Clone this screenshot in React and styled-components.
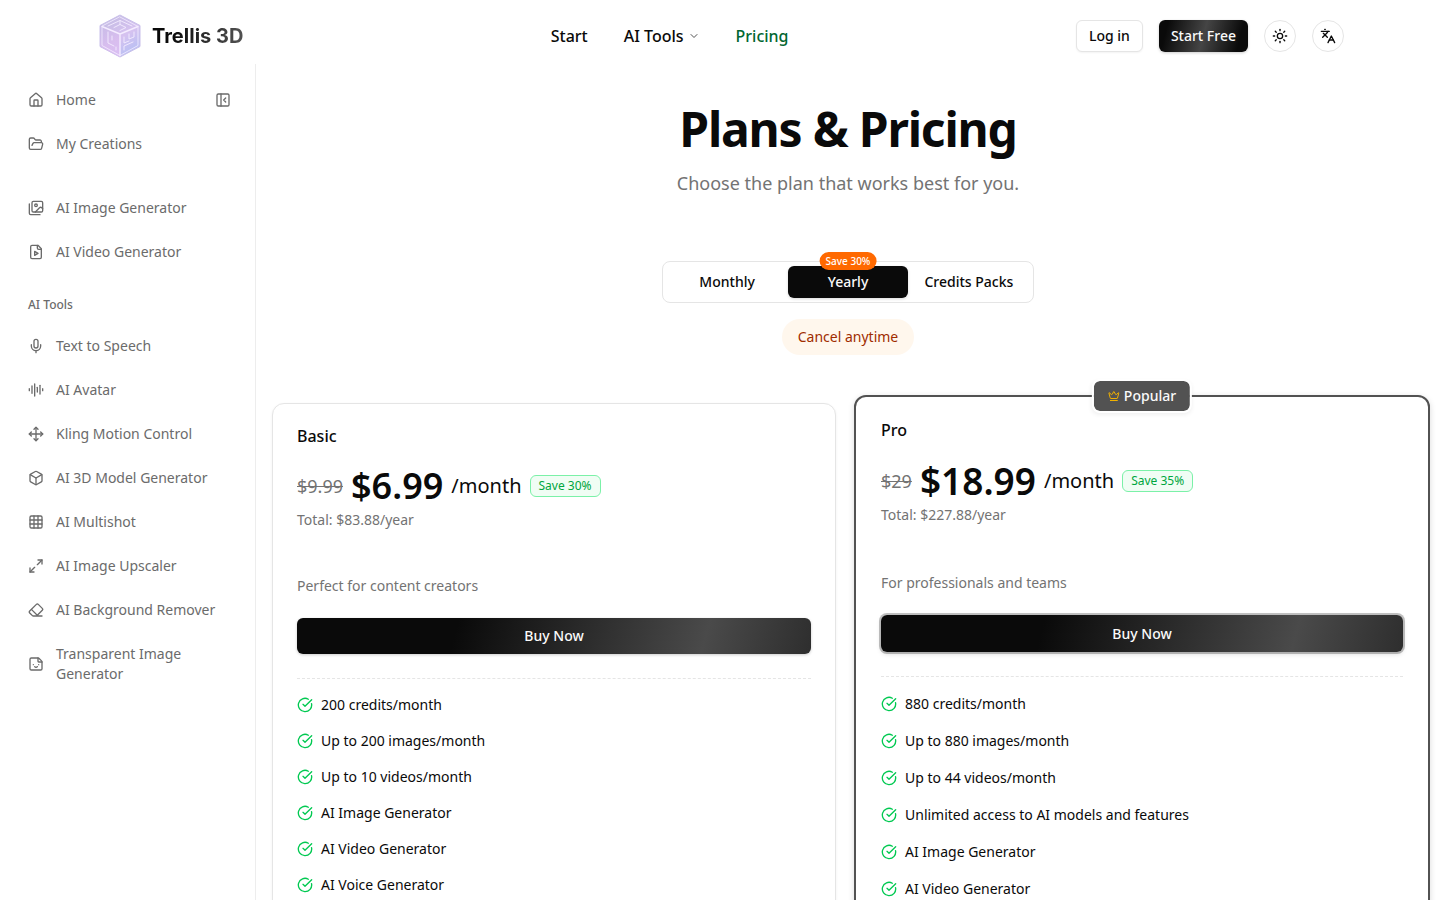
/*
 *
 * Pricing page
 *
 */
import React, { useState } from 'react';
import styled, { createGlobalStyle, css } from 'styled-components';
import {
  AudioLines,
  Box,
  ChevronDown,
  CircleCheckBig,
  Crown,
  Eraser,
  FolderOpen,
  Grid3x3,
  House,
  Languages,
  Maximize2,
  Mic,
  Move,
  PanelLeftClose,
  Sticker,
  Sun,
} from 'lucide-react';

const GlobalStyle = createGlobalStyle`
  *, *::before, *::after {
    box-sizing: border-box;
  }

  body {
    margin: 0;
    background: #fff;
    color: #0a0a0a;
    font-family: "Noto Sans", sans-serif;
    font-size: 14px;
    line-height: 20px;
  }

  h1, h2, p, ul {
    margin: 0;
    padding: 0;
  }

  button {
    font-family: inherit;
    color: inherit;
    cursor: pointer;
  }

  a {
    color: inherit;
    text-decoration: none;
  }
`;

/* Header */

const Header = styled.header`
  display: flex;
  align-items: center;
  justify-content: space-between;
  height: 64px;
  padding: 8px 96px 0;
`;

const Brand = styled.a`
  display: flex;
  align-items: center;
  gap: 8px;
  padding-right: 20px;
`;

const BrandName = styled.span`
  font-family: Inter, sans-serif;
  font-size: 20px;
  font-weight: 700;
  line-height: 28px;
  color: transparent;
  background: linear-gradient(90deg, #0a0a0a 20%, #525252);
  background-clip: text;
`;

const Nav = styled.nav`
  display: flex;
  align-items: center;
  gap: 36px;
  font-size: 16px;
  font-weight: 500;
  line-height: 24px;
`;

const NavLink = styled.a`
  display: flex;
  align-items: center;
  gap: 4px;
  color: ${({ $active }) => ($active ? '#016630' : '#0a0a0a')};

  svg {
    color: #525252;
  }
`;

const Actions = styled.div`
  display: flex;
  align-items: center;
  gap: 16px;
`;

const SmallButton = styled.button`
  height: 32px;
  padding: 0 12px;
  border: 1px solid #e5e5e5;
  border-radius: 6px;
  background: #fff;
  font-size: 14px;
  font-weight: 500;
  line-height: 20px;
  box-shadow: 0 1px 2px rgba(0, 0, 0, 0.05);

  ${({ $primary }) =>
    $primary &&
    css`
      border: 0;
      color: #fafafa;
      background: linear-gradient(105deg, #0a0a0a 10%, #454545 50%, #0a0a0a 88%);
      box-shadow: 0 1px 3px rgba(0, 0, 0, 0.2);
    `}
`;

const RoundButton = styled.button`
  display: flex;
  align-items: center;
  justify-content: center;
  width: 32px;
  height: 32px;
  padding: 0;
  border: 1px solid #e5e5e5;
  border-radius: 50%;
  background: #fff;
`;

/* Sidebar */

const Body = styled.div`
  display: flex;
  min-height: calc(100vh - 64px);
`;

const Sidebar = styled.aside`
  flex: 0 0 256px;
  padding: 18px 16px;
  border-right: 1px solid #ededed;
  color: #6b6b6b;
`;

const SideGroup = styled.ul`
  display: flex;
  flex-direction: column;
  gap: 8px;
  margin-bottom: 28px;
  list-style: none;
`;

const SideRow = styled.li`
  display: flex;
  align-items: center;
`;

const SideLink = styled.a`
  flex: 1;
  display: flex;
  align-items: center;
  gap: 12px;
  padding: 8px 12px;

  svg {
    flex-shrink: 0;
  }
`;

const CollapseButton = styled.button`
  display: flex;
  padding: 8px;
  border: 0;
  background: none;
`;

const SideLabel = styled.h2`
  padding: 0 12px;
  margin: -1px 0 15px;
  font-size: 12px;
  font-weight: 500;
  line-height: 16px;
`;

/* Page heading */

const Main = styled.main`
  flex: 1;
  min-width: 0;
  display: flex;
  flex-direction: column;
  align-items: center;
  padding: 41px 16px 48px;
`;

const Title = styled.h1`
  font-size: 48px;
  font-weight: 700;
  line-height: 48px;
  letter-spacing: -0.025em;
`;

const Subtitle = styled.p`
  margin-top: 16px;
  font-size: 18px;
  line-height: 28px;
  color: #737373;
`;

const Tabs = styled.div`
  display: grid;
  grid-template-columns: repeat(3, 1fr);
  margin-top: 64px;
  padding: 4px;
  border: 1px solid #e5e5e5;
  border-radius: 8px;
`;

const Tab = styled.button`
  position: relative;
  height: 32px;
  padding: 0 16px;
  border: 0;
  border-radius: 6px;
  font-size: 14px;
  font-weight: 500;
  line-height: 20px;
  background: none;

  &[aria-selected='true'] {
    color: #fafafa;
    background: #0a0a0a;
    box-shadow: 0 1px 3px rgba(0, 0, 0, 0.15);
  }
`;

const TabBadge = styled.span`
  position: absolute;
  top: -14px;
  left: 50%;
  transform: translateX(-50%);
  padding: 0 6px;
  border-radius: 9px;
  font-size: 10px;
  font-weight: 500;
  line-height: 18px;
  white-space: nowrap;
  color: #fff;
  background: #ff6900;
`;

const Notice = styled.p`
  margin-top: 16px;
  padding: 8px 16px;
  border-radius: 18px;
  color: #9f2d00;
  background: #fff7ed;
`;

/* Plan cards */

const Plans = styled.div`
  align-self: stretch;
  display: grid;
  grid-template-columns: 1fr 1fr;
  gap: 24px;
  margin-top: 48px;
`;

const Card = styled.section`
  position: relative;
  display: flex;
  flex-direction: column;
  padding: 24px;
  border: 1px solid #e5e5e5;
  border-radius: 12px;
  background: #fff;
  box-shadow: 0 1px 3px rgba(0, 0, 0, 0.06);

  ${({ $popular }) =>
    $popular &&
    css`
      margin: -8px -6px;
      padding: 25px;
      border: 2px solid #525252;
      box-shadow: 0 2px 6px rgba(0, 0, 0, 0.15);
    `}
`;

const PopularBadge = styled.span`
  position: absolute;
  top: -18px;
  left: 50%;
  transform: translateX(-50%);
  display: flex;
  align-items: center;
  gap: 4px;
  padding: 5px 14px;
  border: 2px solid #fff;
  border-radius: 8px;
  font-weight: 500;
  color: #fafafa;
  background: #525252;
  background-clip: padding-box;
  box-shadow: 0 2px 4px rgba(0, 0, 0, 0.06);

  svg {
    color: #f0b100;
  }
`;

const PlanName = styled.h2`
  font-size: 16px;
  font-weight: 500;
  line-height: 16px;
`;

const PriceRow = styled.div`
  display: flex;
  align-items: center;
  gap: 8px;
  margin-top: ${({ $popular }) => ($popular ? 23 : 22)}px;
`;

const OldPrice = styled.s`
  font-size: 18px;
  line-height: 28px;
  color: #737373;
`;

const Price = styled.span`
  font-size: ${({ $popular }) => ($popular ? 37 : 36)}px;
  font-weight: 600;
  line-height: 40px;
`;

const Period = styled.span`
  font-size: 20px;
  line-height: 28px;
`;

const SaveBadge = styled.span`
  padding: 2px 8px;
  border: 1px solid #7bf1a8;
  border-radius: 6px;
  font-size: 12px;
  line-height: 16px;
  color: #00a63e;
  background: #f0fdf4;
`;

const Total = styled.p`
  margin-top: 4px;
  color: #737373;
`;

const Description = styled.p`
  margin-top: ${({ $popular }) => ($popular ? 48 : 46)}px;
  color: #737373;
`;

const BuyButton = styled.button`
  height: 36px;
  margin-top: 22px;
  border: 0;
  border-radius: 6px;
  font-size: 14px;
  font-weight: 500;
  line-height: 20px;
  color: #fafafa;
  background: linear-gradient(105deg, #0a0a0a 31%, #4a4a4a 79%, #2e2e2e);
  box-shadow: 0 1px 3px rgba(0, 0, 0, 0.2);

  ${({ $popular }) =>
    $popular &&
    css`
      height: 37px;
      box-shadow: 0 0 0 2px rgba(10, 10, 10, 0.25), 0 2px 5px rgba(0, 0, 0, 0.15);
    `}
`;

const Features = styled.ul`
  display: flex;
  flex-direction: column;
  gap: ${({ $popular }) => ($popular ? 17 : 16)}px;
  margin-top: 24px;
  padding-top: ${({ $popular }) => ($popular ? 17 : 16)}px;
  border-top: 1px dashed #e5e5e5;
  list-style: none;
`;

const Feature = styled.li`
  display: flex;
  align-items: center;
  gap: 8px;

  svg {
    flex-shrink: 0;
    color: #00c951;
  }
`;

const Logo = () => (
  <svg width="48" height="48" viewBox="0 0 48 48" fill="none" aria-hidden="true">
    <defs>
      <linearGradient id="cube" x1="10" y1="4" x2="36" y2="44" gradientUnits="userSpaceOnUse">
        <stop offset="0" stopColor="#c3bce2" />
        <stop offset="0.55" stopColor="#d6c2f0" />
        <stop offset="1" stopColor="#b3c0f4" />
      </linearGradient>
      <linearGradient id="side" x1="4" y1="14" x2="24" y2="44" gradientUnits="userSpaceOnUse">
        <stop offset="0" stopColor="#c9bbe8" />
        <stop offset="1" stopColor="#e6bdf3" />
      </linearGradient>
    </defs>
    <path d="M24 3 44 13.500V34.500L24 45 4 34.500V13.500Z" fill="url(#cube)" stroke="#c9c0ea" strokeLinejoin="round" />
    <path d="M4 13.500 24 20V45L4 34.500Z" fill="url(#side)" opacity="0.7" />
    <g stroke="#f4ecff" strokeLinejoin="round" strokeLinecap="round">
      <path d="M24 5 42 14.500V33.500L24 43.500 6 33.500V14.500Z" strokeWidth="0.8" />
      <path d="M6 14.500 24 22 42 14.500M24 22V43.500" strokeWidth="1.400" />
      <path d="M12 14 24 8.500 36 14M18 15.500 24 12.500 30 15.500 24 18.500M24 8.500V12.500" strokeWidth="0.9" />
      <path d="M12 20V31L18 34M16 24V28M20 38V35" strokeWidth="0.9" />
      <path d="M38 20V25L33 27V22M28 25V31L33 29M28 38V34L37 30" strokeWidth="0.9" />
    </g>
  </svg>
);

const ImagesIcon = ({ size = 16 }) => (
  <svg
    width={size}
    height={size}
    viewBox="0 0 24 24"
    fill="none"
    stroke="currentColor"
    strokeWidth="2"
    strokeLinecap="round"
    strokeLinejoin="round"
  >
    <path d="M18 22H4a2 2 0 0 1-2-2V6" />
    <path d="m22 13-1.296-1.296a2.410 2.410 0 0 0-3.408 0L11 18" />
    <circle cx="12" cy="8" r="2" />
    <rect width="16" height="16" x="6" y="2" rx="2" />
  </svg>
);

const VideoFileIcon = ({ size = 16 }) => (
  <svg
    width={size}
    height={size}
    viewBox="0 0 24 24"
    fill="none"
    stroke="currentColor"
    strokeWidth="2"
    strokeLinecap="round"
    strokeLinejoin="round"
  >
    <path d="M15 2H6a2 2 0 0 0-2 2v16a2 2 0 0 0 2 2h12a2 2 0 0 0 2-2V7Z" />
    <path d="M14 2v4a2 2 0 0 0 2 2h4" />
    <path d="m10 11 5 3-5 3v-6Z" />
  </svg>
);

const createLinks = [
  { label: 'AI Image Generator', icon: ImagesIcon },
  { label: 'AI Video Generator', icon: VideoFileIcon },
];

const toolLinks = [
  { label: 'Text to Speech', icon: Mic },
  { label: 'AI Avatar', icon: AudioLines },
  { label: 'Kling Motion Control', icon: Move },
  { label: 'AI 3D Model Generator', icon: Box },
  { label: 'AI Multishot', icon: Grid3x3 },
  { label: 'AI Image Upscaler', icon: Maximize2 },
  { label: 'AI Background Remover', icon: Eraser },
  { label: 'Transparent Image Generator', icon: Sticker },
];

const periods = ['Monthly', 'Yearly', 'Credits Packs'];

const plans = [
  {
    name: 'Basic',
    oldPrice: '$9.99',
    price: '$6.99',
    save: 'Save 30%',
    total: 'Total: $83.88/year',
    description: 'Perfect for content creators',
    features: [
      '200 credits/month',
      'Up to 200 images/month',
      'Up to 10 videos/month',
      'AI Image Generator',
      'AI Video Generator',
      'AI Voice Generator',
    ],
  },
  {
    name: 'Pro',
    popular: true,
    oldPrice: '$29',
    price: '$18.99',
    save: 'Save 35%',
    total: 'Total: $227.88/year',
    description: 'For professionals and teams',
    features: [
      '880 credits/month',
      'Up to 880 images/month',
      'Up to 44 videos/month',
      'Unlimited access to AI models and features',
      'AI Image Generator',
      'AI Video Generator',
    ],
  },
];

const SideItem = ({ label, icon: Icon, children }) => (
  <SideRow>
    <SideLink href="#">
      <Icon size={16} />
      {label}
    </SideLink>
    {children}
  </SideRow>
);

const Plan = ({ plan }) => (
  <Card $popular={plan.popular}>
    {plan.popular && (
      <PopularBadge>
        <Crown size={12} />
        Popular
      </PopularBadge>
    )}
    <PlanName>{plan.name}</PlanName>
    <PriceRow $popular={plan.popular}>
      <OldPrice>{plan.oldPrice}</OldPrice>
      <Price $popular={plan.popular}>{plan.price}</Price>
      <Period>/month</Period>
      <SaveBadge>{plan.save}</SaveBadge>
    </PriceRow>
    <Total>{plan.total}</Total>
    <Description $popular={plan.popular}>{plan.description}</Description>
    <BuyButton type="button" $popular={plan.popular}>
      Buy Now
    </BuyButton>
    <Features $popular={plan.popular}>
      {plan.features.map(feature => (
        <Feature key={feature}>
          <CircleCheckBig size={16} />
          {feature}
        </Feature>
      ))}
    </Features>
  </Card>
);

const App = () => {
  const [period, setPeriod] = useState('Yearly');

  return (
    <>
      <GlobalStyle />
      <Header>
        <Brand href="#">
          <Logo />
          <BrandName>Trellis 3D</BrandName>
        </Brand>
        <Nav>
          <NavLink href="#">Start</NavLink>
          <NavLink href="#">
            AI Tools
            <ChevronDown size={12} />
          </NavLink>
          <NavLink href="#" $active>
            Pricing
          </NavLink>
        </Nav>
        <Actions>
          <SmallButton type="button">Log in</SmallButton>
          <SmallButton type="button" $primary>
            Start Free
          </SmallButton>
          <RoundButton type="button" aria-label="Theme">
            <Sun size={16} />
          </RoundButton>
          <RoundButton type="button" aria-label="Language">
            <Languages size={16} />
          </RoundButton>
        </Actions>
      </Header>
      <Body>
        <Sidebar>
          <SideGroup>
            <SideItem label="Home" icon={House}>
              <CollapseButton type="button" aria-label="Collapse sidebar">
                <PanelLeftClose size={16} />
              </CollapseButton>
            </SideItem>
            <SideItem label="My Creations" icon={FolderOpen} />
          </SideGroup>
          <SideGroup>
            {createLinks.map(link => (
              <SideItem key={link.label} {...link} />
            ))}
          </SideGroup>
          <SideLabel>AI Tools</SideLabel>
          <SideGroup>
            {toolLinks.map(link => (
              <SideItem key={link.label} {...link} />
            ))}
          </SideGroup>
        </Sidebar>
        <Main>
          <Title>Plans &amp; Pricing</Title>
          <Subtitle>Choose the plan that works best for you.</Subtitle>
          <Tabs role="tablist">
            {periods.map(name => (
              <Tab
                key={name}
                type="button"
                role="tab"
                aria-selected={period === name}
                onClick={() => setPeriod(name)}
              >
                {name}
                {name === 'Yearly' && <TabBadge>Save 30%</TabBadge>}
              </Tab>
            ))}
          </Tabs>
          <Notice>Cancel anytime</Notice>
          <Plans>
            {plans.map(plan => (
              <Plan key={plan.name} plan={plan} />
            ))}
          </Plans>
        </Main>
      </Body>
    </>
  );
};

export default App;
